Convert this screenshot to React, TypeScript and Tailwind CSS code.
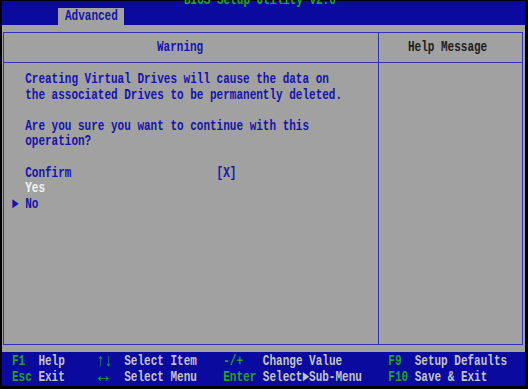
import React from 'react';

// BIOS text is a tall, narrow bitmap font: render Liberation Mono at 15px and squeeze it
// horizontally so one cell is 6.6px wide, as on the screen.
function Mono({ children, className = '' }: { children: React.ReactNode; className?: string }) {
  return (
    <div className={`origin-top-left scale-x-[0.7333] whitespace-pre text-[15px] leading-[15.6px] font-bold ${className}`}>
      {children}
    </div>
  );
}

const blue = 'text-[#1414aa]';
const green = 'text-[#22a326]';

export default function App() {
  return (
    <div className="w-[528px] h-[389px] overflow-hidden bg-black pt-px pl-[2px] pr-[3px] pb-[3px] font-['Liberation_Mono',monospace]">
      <div className="flex h-full flex-col">
        {/* Title bar */}
        <div className="relative h-[24px] shrink-0 bg-[#0a0a9e]">
          <div className="absolute left-[182px] top-[-8px]">
            <Mono className={green}>BIOS Setup Utility v2.0</Mono>
          </div>
          <div className="ml-[56px] mt-[7px] h-[17px] w-[66px] bg-[#a1a1a1] pl-[7px] pt-px">
            <Mono className={blue}>Advanced</Mono>
          </div>
        </div>

        {/* Main area */}
        <div className="h-[327px] shrink-0 bg-[#a1a1a1] pt-[7px] pl-px pr-[2px]">
          <div className="flex h-[313px] border border-[#3232b4]">
            <div className="flex w-[375px] flex-col border-r border-[#3232b4]">
              <div className="h-[30px] border-b border-[#3232b4] pl-[153px] pt-[7px]">
                <Mono className={blue}>Warning</Mono>
              </div>
              <div className="pl-[8px] pt-[9px]">
                <Mono className={blue}>
                  {'  Creating Virtual Drives will cause the data on\n'}
                  {'  the associated Drives to be permanently deleted.\n'}
                  {'\n'}
                  {'  Are you sure you want to continue with this\n'}
                  {'  operation?\n'}
                  {'\n'}
                  {'  Confirm                      [X]\n'}
                  <span className="text-[#f4f4f4]">{'  Yes'}</span>
                  {'\n► No'}
                </Mono>
              </div>
            </div>
            <div className="flex-1">
              <div className="h-[30px] border-b border-[#3232b4] pl-[29px] pt-[7px]">
                <Mono className="text-[#1c1c1c]">Help Message</Mono>
              </div>
            </div>
          </div>
        </div>

        {/* Key legend */}
        <div className="h-[34px] shrink-0 bg-[#0a0a9e] pl-[10px] pt-[2px]">
          <Mono className="text-[#c4c4c4]">
            <span className={green}>F1</span>
            {'  Help     '}
            <span className={`inline-block scale-[1.2] ${green}`}>↑↓</span>
            {'  Select Item    '}
            <span className={green}>-/+</span>
            {'   Change Value       '}
            <span className={green}>F9</span>
            {'  Setup Defaults\n'}
            <span className={green}>Esc</span>
            {' Exit     '}
            <span className={`inline-block origin-left scale-x-[1.65] scale-y-[1.3] ${green}`}>↔</span>
            {'   Select Menu    '}
            <span className={green}>Enter</span>
            {' Select►Sub-Menu    '}
            <span className={green}>F10</span>
            {' Save & Exit'}
          </Mono>
        </div>
      </div>
    </div>
  );
}
